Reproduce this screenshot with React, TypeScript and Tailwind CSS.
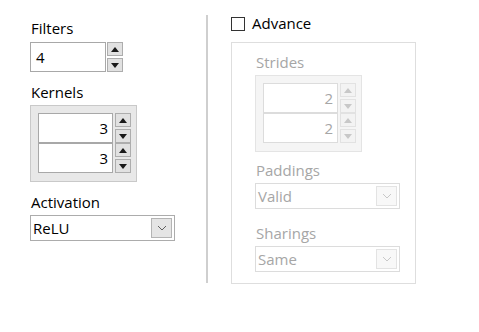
import React from "react";

const font = { fontFamily: '"Open Sans", "Noto Sans", sans-serif' };

function Tri({ up, color }: { up: boolean; color: string }) {
  return (
    <svg width="8" height="5" viewBox="0 0 8 5">
      {up ? <polygon points="0,5 8,5 4,0" fill={color} /> : <polygon points="0,0 8,0 4,5" fill={color} />}
    </svg>
  );
}

function Spin({ disabled }: { disabled?: boolean }) {
  const cls = disabled
    ? "w-[16px] h-[14px] flex items-center justify-center bg-[#f3f3f3] border border-[#e2e2e2]"
    : "w-[16px] h-[14px] flex items-center justify-center bg-[#e1e1e1] border border-[#adadad]";
  const c = disabled ? "#c8c8c8" : "#1a1a1a";
  return (
    <div className="flex flex-col gap-[2px]">
      <div className={cls}>
        <Tri up color={c} />
      </div>
      <div className={cls}>
        <Tri up={false} color={c} />
      </div>
    </div>
  );
}

function Combo({ value, disabled }: { value: string; disabled?: boolean }) {
  return (
    <div
      className={
        "w-[145px] h-[26px] flex items-center justify-between bg-white border pl-[2px] pr-[2px] " +
        (disabled ? "border-[#dcdcdc] text-[#a6a6a6]" : "border-[#acacac] text-black")
      }
    >
      <span className="leading-[20px]">{value}</span>
      <div
        className={
          "w-[21px] h-[20px] flex items-center justify-center border " +
          (disabled ? "bg-[#f8f8f8] border-[#e3e3e3]" : "bg-[#e5e5e5] border-[#b4b4b4]")
        }
      >
        <svg width="10" height="6" viewBox="0 0 10 6">
          <polyline points="1,1 5,5 9,1" fill="none" stroke={disabled ? "#c8c8c8" : "#606060"} strokeWidth="1" />
        </svg>
      </div>
    </div>
  );
}

function PairGroup({ value, disabled }: { value: string; disabled?: boolean }) {
  const box =
    "w-[75px] h-[30px] bg-white border flex items-center justify-end pr-[4px] leading-[20px] " +
    (disabled ? "border-[#dcdcdc] text-[#a6a6a6]" : "border-[#a8a8a8] text-black");
  return (
    <div
      className={
        "w-[107px] h-[77px] border p-[7px] " +
        (disabled ? "bg-[#f5f5f5] border-[#e4e4e4]" : "bg-[#e8e8e8] border-[#c9c9c9]")
      }
    >
      <div className="flex gap-[2px]">
        <div className="flex flex-col">
          <div className={box}>{value}</div>
          <div className={box}>{value}</div>
        </div>
        <div className="flex flex-col">
          <Spin disabled={disabled} />
          <Spin disabled={disabled} />
        </div>
      </div>
    </div>
  );
}

export default function App() {
  return (
    <div className="w-[479px] h-[332px] bg-white flex text-[15px]" style={font}>
      <div className="w-[206px] pl-[30px] pt-[18px] flex flex-col items-start">
        <div className="leading-[20px] h-[20px] pl-[1px] text-black">Filters</div>
        <div className="mt-[4px] flex gap-[1px]">
          <div className="w-[76px] h-[30px] border border-[#a8a8a8] bg-white flex items-center pl-[5px] leading-[20px]">
            4
          </div>
          <Spin />
        </div>
        <div className="mt-[10px] leading-[20px] h-[20px] pl-[1px] text-black">Kernels</div>
        <div className="mt-[3px]">
          <PairGroup value="3" />
        </div>
        <div className="mt-[10px] leading-[20px] h-[20px] pl-[1px] text-black">Activation</div>
        <div className="mt-[3px]">
          <Combo value="ReLU" />
        </div>
      </div>
      <div className="mt-[15px] w-[2px] h-[268px] bg-[#cfcfcf]" />
      <div className="ml-[23px] pt-[13px] flex flex-col items-start">
        <div className="flex items-start gap-[7px] h-[20px]">
          <div className="mt-[4px] w-[14px] h-[14px] border border-[#333333] bg-white" />
          <span className="leading-[20px] text-black">Advance</span>
        </div>
        <div className="mt-[9px] w-[185px] h-[242px] border border-[#dedede] pl-[23px] pt-[9px] flex flex-col items-start">
          <div className="leading-[20px] h-[20px] pl-[1px] text-[#a6a6a6]">Strides</div>
          <div className="mt-[3px]">
            <PairGroup value="2" disabled />
          </div>
          <div className="mt-[8px] leading-[20px] h-[20px] pl-[1px] text-[#a6a6a6]">Paddings</div>
          <div className="mt-[3px]">
            <Combo value="Valid" disabled />
          </div>
          <div className="mt-[14px] leading-[20px] h-[20px] pl-[1px] text-[#a6a6a6]">Sharings</div>
          <div className="mt-[3px]">
            <Combo value="Same" disabled />
          </div>
        </div>
      </div>
    </div>
  );
}
